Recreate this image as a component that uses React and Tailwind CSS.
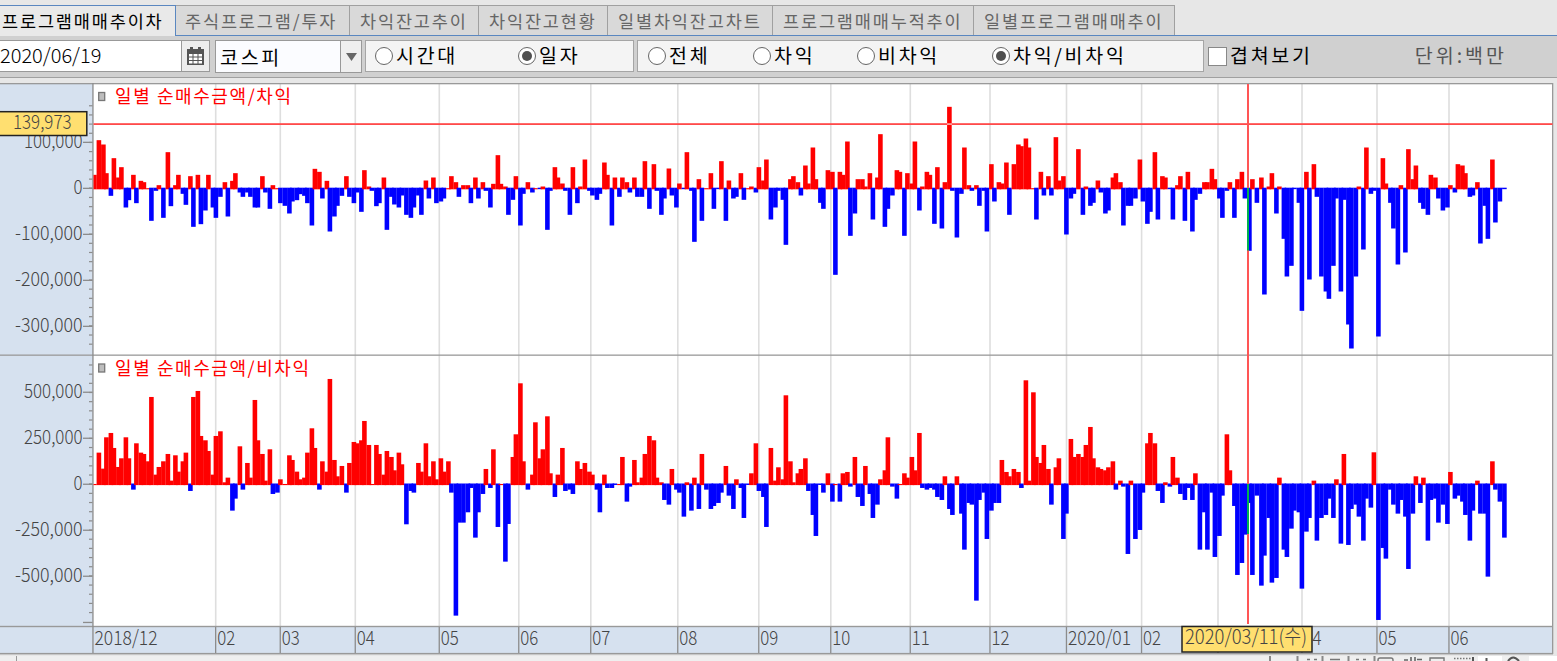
/* eslint-disable react/prop-types */
import { useState } from "react";

const TABS = [
  { label: "프로그램매매추이차", width: "w-[176px]", pad: "pl-0.5" },
  { label: "주식프로그램/투자", width: "w-[174px]", pad: "pl-[9px]" },
  { label: "차익잔고추이", width: "w-[129px]", pad: "pl-2.5" },
  { label: "차익잔고현황", width: "w-[129px]", pad: "pl-2.5" },
  { label: "일별차익잔고차트", width: "w-[165px]", pad: "pl-2.5" },
  { label: "프로그램매매누적추이", width: "w-[201px]", pad: "pl-2.5" },
  { label: "일별프로그램매매추이", width: "w-[201px]", pad: "pl-2.5" },
];

// daily net buying, one entry per trading day, in thirds of a pixel
const ARBITRAGE = [
  // 2018/12
  41, 145, 132, 46, -22, 91, 33, 64, -57, -35, 41, -44, 23, 19, 1, -97, -7, 10, -88, 109, -53, 10, 41, -16, -49, 37, -115, 41, -107, -66, 41, -57,
  // 02
  -88, -25, 19, -84, 23, 46, -12, -25, -12, -25, -57, -57, 37, -12, -61, 10, 1,
  // 03
  -44, -52, -75, -39, -35, -17, -22, -44, -111, 59, 50, -30, 23, -129, -84, -52, -22, 37, -25, -44,
  // 04
  -12, -70, 55, 6, -7, -53, -44, 33, -124, -25, -48, -57, -21, -79, -88, -57, -21, -79, 24, -30, 33, -44,
  // 05
  -39, -30, 1, 37, 19, -25, 10, 10, -44, 33, -30, 19, -7, -57, 14, 100, 14, 6, -79, -34, 37,
  // 06
  -111, -16, 19, -12, 1, -2, 6, -124, -7, 64, 33, 15, -7, -79, 64, -44, 6, 87, -7,
  // 07
  -21, -34, -16, 78, 41, -111, 33, -25, 33, 19, -12, 33, -25, -25, 82, -61, 73, -7, -79, -30, 60, -21, -57,
  // 08
  15, -2, 109, -7, -160, 28, -97, 1, 46, -61, -2, 82, -97, 24, -30, -25, 46, -34, 1, 6, -12,
  // 09
  64, 24, 87, -93, -57, -7, -34, -169, 28, 37, 19, -21, 69, 15, 123, 28, -43, -61, 55,
  // 10
  50, -259, 50, 41, 141, -142, -75, 28, 28, 6, 46, -93, 33, 163, -115, -61, -21, 55, 50, -142, 46,
  // 11
  15, 141, -66, 6, 50, 41, -106, 64, -120, 19, 245, -7, -147, -16, 123, 10, -7, 10, -52, -7, -129,
  // 12
  73, -39, 19, 15, 78, -79, 73, 132, 127, 150, 123, 1, -93, 50, -21, 37, -21, 154, 24, 37,
  // 2020/01
  -138, -30, -16, 118, -79, 6, -52, -43, 24, -12, -75, -66, 33, 46, 19, -111, -52, -52, -30, 87,
  // 02
  -39, -106, -70, 109, -93, 37, 33, -2, -93, 10, 37, -97, 50, -129, -34, -16, 19, 19, 59, 28,
  // 03
  -30, -88, -7, 19, -88, 28, 50, -30, -187, 28, -43, 33, -318, 6, 46, -75, 6, -151, -264, -232, -2, -43,
  // 04
  -367, 50, -273, 73, -25, -264, -309, -331, -232, -30, -309, -34, -408, -480, -264, 6, -183, 123, -16, -7,
  // 05
  -444, 91, 15, -43, -120, -228, 10, -192, 118, 28, 69, -43, -61, -79, 41, 33, -30, -66, -57,
  // 06
  10, -12, 73, 69, 46, -25, -21, 19, -165, -52, -151, 87, -102, -39, -2,
];

const NON_ARBITRAGE = [
  // 2018/12
  1, 95, 47, 141, 154, 109, 52, 78, 141, 78, -16, 123, 95, 91, 69, 262, 29, 52, 69, 91, 11, 87, 38, 69, 95, -20, 262, 280, 145, 132, 100, 29,
  // 02
  145, 159, 6, 20, -79, -43, 114, -16, 64, 20, 253, 132, 91, 11, 105, -29, -25,
  // 03
  15, 1, 87, 73, 38, 15, 20, 95, 168, 109, -16, 69, 38, 316, 73, 24, 55, -25, 64, 127,
  // 04
  123, 132, 190, 118, 1, 118, 91, 29, 100, 82, 42, 95, 60, -120, -20, -25, 64, 38, 123, 24, 69, 15,
  // 05
  78, 38, 69, -25, -394, -115, -115, -84, -11, -160, -84, -29, 46, -11, 105, -128, 1, -232, -119, 82, 150,
  // 06
  303, 69, -16, 29, 186, 78, 105, 204, 33, -38, 29, 109, -20, -16, -29, 69, 46, 64, 38,
  // 07
  29, -16, -84, 29, -11, -11, -2, 1, 82, -52, -7, 73, 6, 20, 91, 145, 132, 20, 6, -47, -61, 46, -16,
  // 08
  -25, -97, 6, -79, 20, -74, 91, -16, -74, -65, -56, -25, 55, -34, -74, 15, -11, -101, -2, 33, 123,
  // 09
  -20, -38, -128, 109, 11, 51, 15, 267, 69, 6, 33, 46, 78, -20, -92, -155, -2, -25, 33,
  // 10
  -52, 1, -52, 33, 37, -7, 82, -38, -65, 55, -29, -101, -61, 15, 42, 141, -7, -43, 1, 33, 20,
  // 11
  82, 42, 154, -11, -16, -11, -16, -38, -47, 24, -74, -92, 24, -88, -196, -56, -61, -349, -47, -25, -164,
  // 12
  -79, -56, -56, 73, 37, 24, 46, 37, -11, 312, 11, 276, 82, 64, 118, 46, -61, 51, 78, -164,
  // 2020/01
  -88, 136, 82, 91, 82, 118, 172, 78, 51, 46, 42, 51, 69, -16, 11, -7, -209, 11, -164, -137,
  // 02
  -25, 123, 154, 123, -20, -56, 6, -7, 82, 20, -29, -47, -11, -47, 33, -196, -84, -196, -25, -218,
  // 03
  -155, -34, 150, 42, -65, -272, -236, -151, -56, -272, -34, -304, -214, -101, -295, -281, 20, -196, -218, -133, -79, -84,
  // 04
  -313, -142, -101, 11, -169, -101, -92, -43, -101, 15, -178, 91, -182, -74, -61, -97, -169, -43, -70, 96,
  // 05
  -407, -191, -223, -16, -61, -88, -47, -97, -254, -88, 24, -56, 20, -169, -47, -43, -115, -61, -119,
  // 06
  37, -43, -34, -52, -92, -169, -79, 11, -88, -88, -277, 69, -16, -52, -160,
];

const MONTHS = [
  { x: 93, label: "2018/12" },
  { x: 215.7, label: "02" },
  { x: 280.3, label: "03" },
  { x: 355.3, label: "04" },
  { x: 439.3, label: "05" },
  { x: 518.8, label: "06" },
  { x: 590.8, label: "07" },
  { x: 677.8, label: "08" },
  { x: 758.8, label: "09" },
  { x: 830.8, label: "10" },
  { x: 910.3, label: "11" },
  { x: 990, label: "12" },
  { x: 1066.5, label: "2020/01" },
  { x: 1141.6, label: "02" },
  { x: 1218, label: "" },
  { x: 1302, label: "4", dx: 10.5 },
  { x: 1377, label: "05" },
  { x: 1449, label: "06" },
];

const digits = "font-['Noto_Sans_CJK_KR',sans-serif] font-light";

// width of a label on the 9px digit grid
function labelWidth(text) {
  return [...text].reduce((w, c) => w + (c === "," ? 4.5 : 9), 0);
}

function GridText({ x, y, text, end, fill = "#444" }) {
  const w = labelWidth(text);
  return (
    <text
      x={end ? x - w : x}
      y={y}
      textLength={w}
      lengthAdjust="spacingAndGlyphs"
      fill={fill}
      className={`${digits} text-[20px]`}
    >
      {text}
    </text>
  );
}

function Bars({ data, zero }) {
  return data.map((v, i) => {
    const left = 96.6 + 1.5 * Math.round((i - 1) * 2.5311);
    const x = Math.max(left, 93.5);
    const h = Math.abs(v) / 3;
    return (
      <rect
        key={i}
        x={x}
        y={v > 0 ? zero - h : zero - 0.8}
        width={left + 4.6 - x}
        height={h + 0.8}
        fill={v > 0 ? "#ff0000" : "#0000ff"}
      />
    );
  });
}

function Axis({ labels, zero, step, from, to }) {
  const minor = [];
  for (let y = zero; y > from; y -= 9.17) minor.push(y);
  for (let y = zero; y < to; y += 9.17) minor.push(y);
  return (
    <g>
      {minor.map((y, i) => (
        <rect key={i} x="89" y={y - 0.6} width="3.5" height="1.2" fill="#8c8c8c" />
      ))}
      {labels.map(([n, text]) => (
        <g key={n}>
          <rect x="83" y={zero - n * step - 0.6} width="9.5" height="1.3" fill="#8c8c8c" />
          <GridText x={82.5} y={zero - n * step + 5.6} text={text} end />
        </g>
      ))}
    </g>
  );
}

function Legend({ y, text, width }) {
  return (
    <g>
      <rect x="98.7" y={y - 5} width="6" height="8" fill="#bdbdbd" stroke="#777" strokeWidth="1.3" />
      <text
        x="115"
        y={y + 5.8}
        textLength={width}
        fill="#ff0000"
        className="font-['Noto_Sans_CJK_KR',sans-serif] text-[18px] font-normal"
      >
        {text}
      </text>
    </g>
  );
}

function Chart() {
  return (
    <svg width="1557" height="573" viewBox="0 83 1557 573" className="block">
      <rect x="0" y="83" width="93" height="571" fill="#d6e1ef" />
      <rect x="93" y="83" width="1459" height="543" fill="#fff" />
      <rect x="0" y="627" width="1552" height="26" fill="#d6e1ef" />

      {MONTHS.slice(1).map((m) => (
        <rect key={m.x} x={m.x - 0.8} y="84" width="1.6" height="542" fill="#dedede" />
      ))}

      <Axis
        zero={188.3}
        step={46}
        from={100}
        to={352}
        labels={[
          [1, "100,000"],
          [0, "0"],
          [-1, "-100,000"],
          [-2, "-200,000"],
          [-3, "-300,000"],
        ]}
      />
      <Axis
        zero={484.2}
        step={46}
        from={357}
        to={620}
        labels={[
          [2, "500,000"],
          [1, "250,000"],
          [0, "0"],
          [-1, "-250,000"],
          [-2, "-500,000"],
        ]}
      />
      <rect x="83" y="621.8" width="9.5" height="1.3" fill="#8c8c8c" />

      <Legend y={97.5} text="일별 순매수금액/차익" width={176} />
      <Legend y={369} text="일별 순매수금액/비차익" width={194} />

      <rect x="0" y="83" width="1553" height="1.3" fill="#999" />
      <rect x="0" y="354.5" width="1552" height="1.3" fill="#999" />
      <rect x="0" y="625.8" width="1552" height="1.4" fill="#999" />
      <rect x="0" y="652.9" width="1553" height="1.5" fill="#999" />
      <rect x="92.3" y="83" width="1.3" height="570" fill="#8c8c8c" />
      <rect x="1552" y="83" width="1.3" height="571" fill="#999" />

      {/* crosshair */}
      <rect x="93.5" y="123.2" width="1459" height="1.8" fill="#ff4a4a" />
      <Bars data={ARBITRAGE} zero={188.5} />
      <Bars data={NON_ARBITRAGE} zero={484.3} />
      <rect x="947" y="123.2" width="5" height="1.8" fill="#ff9a9a" />
      <rect x="1247" y="84" width="2" height="540" fill="#ff5555" />
      <rect x="1247" y="188" width="2" height="62.5" fill="#00b050" />
      <rect x="1247" y="484" width="2" height="50" fill="#00b050" />

      {MONTHS.map((m) => (
        <g key={m.x}>
          {m.x > 93 && <rect x={m.x - 0.7} y="627" width="1.3" height="26" fill="#8c8c8c" />}
          <GridText x={m.x + (m.dx ?? 1.5)} y={645.3} text={m.label} />
        </g>
      ))}

      <rect x="-2" y="111.7" width="88.8" height="23.8" fill="#ffdf70" stroke="#222" strokeWidth="1.5" />
      <GridText x={13} y={129} text="139,973" />
      <rect x="1182" y="626.5" width="130" height="25.5" fill="#ffdf70" stroke="#222" strokeWidth="1.5" />
      <text
        x="1185"
        y="644.3"
        textLength="122"
        lengthAdjust="spacingAndGlyphs"
        fill="#444"
        className={`${digits} text-[20px]`}
      >
        2020/03/11(수)
      </text>
    </svg>
  );
}

function Radio({ label, value, selected, onSelect, width }) {
  return (
    <button onClick={() => onSelect(value)} className={`flex h-full shrink-0 items-center ${width}`}>
      <span className="flex size-[18px] shrink-0 items-center justify-center rounded-full border-[1.5px] border-[#666] bg-white">
        {selected === value && <span className="size-[10px] rounded-full bg-[#505050]" />}
      </span>
      <span className="ml-[3px] pb-[3px] whitespace-nowrap">{label}</span>
    </button>
  );
}

function BottomBar() {
  return (
    <div className="flex h-[5px] items-start overflow-hidden bg-[#efefef]">
      <div className="h-full w-[17px] border-r border-[#999]" />
      <div className="h-full w-[1254px] border-r-2 border-[#888]" />
      <svg width="286" height="5" viewBox="1271 656 286 5" fill="none" stroke="#777" strokeWidth="1.4">
        <path d="M1297.5 656v5M1322.5 656v5M1348.5 656v5M1374.5 656v5" stroke="#888" strokeWidth="2" />
        <path d="M1307 659.5h3M1314 659.5h3M1330 659.5h10M1356 659.5h3M1363 659.5h3" />
        <path d="M1378 661v-1q0-2 2-2h11q2 0 2 2v1M1430 661v-3h14v3" />
        <path d="M1404 660h4M1411 657v4M1415 657v4M1417 659.5h5" stroke="#666" strokeWidth="1.6" />
        <path d="M1454 658.5h18" strokeDasharray="1.5 1.5" />
        <path d="M1473 657v4" stroke="#555" strokeWidth="2" />
        <path d="M1478 656h24v5h-24zM1529 656h28v5h-28z" fill="#fff" stroke="none" />
        <path d="M1486.5 658v3M1508 661q5-7 11 0" stroke="#555" strokeWidth="2" />
      </svg>
    </div>
  );
}

export default function App() {
  const [tab, setTab] = useState(0);
  const [period, setPeriod] = useState("day");
  const [kind, setKind] = useState("both");

  return (
    <div className="h-[661px] w-[1557px] overflow-hidden bg-[#e7e7e7] font-['Noto_Sans_CJK_KR',sans-serif] font-normal">
      <div className="flex h-9 items-start border-b-[1.5px] border-[#5a87c0] pt-[5px]">
        {TABS.map((t, i) => (
          <button
            key={t.label}
            onClick={() => setTab(i)}
            className={`shrink-0 overflow-hidden border-t border-r text-left text-[17.5px] leading-[27px] tracking-[1.85px] whitespace-nowrap ${t.width} ${t.pad} ${
              i === tab
                ? "h-[31px] border-[#5a87c0] bg-[#e9e9e9] pb-0.5 text-black"
                : "h-[30px] border-[#a0a0a0] bg-[#d9d9d9] pb-px text-[#666]"
            }`}
          >
            {t.label}
          </button>
        ))}
      </div>

      <div className="flex h-[42px] items-start border-b border-[#a0a0a0] bg-[#d0d0d0] pt-1 text-[19.5px] leading-none tracking-[2.7px] text-black">
        <div className="flex h-8 w-[210px] shrink-0 border-[1.5px] border-l-0 border-[#999] bg-white">
          <div className={`flex w-[181px] shrink-0 items-center pb-0.5 text-[20px] tracking-normal ${digits}`}>
            2020/06/19
          </div>
          <div className="flex flex-1 items-center justify-center border-l border-[#999] bg-[#ededed]">
            <svg width="17" height="18" viewBox="0 0 17 18">
              <path d="M0 2h3V0h3v2h5V0h3v2h3v16H0z" fill="#555" />
              <path d="M2 7h3.5v2.5H2zM6.5 7h4v2.5h-4zM11.5 7H15v2.5h-3.5zM2 10.5h3.5V13H2zM6.5 10.5h4V13h-4zM11.5 10.5H15V13h-3.5zM2 14h3.5v2.5H2zM6.5 14h4v2.5h-4zM11.5 14H15v2.5h-3.5z" fill="#fff" />
            </svg>
          </div>
        </div>

        <div className="ml-[5px] flex h-[33px] w-[147px] shrink-0 border-[1.5px] border-[#999] bg-[#fbfcff]">
          <div className="flex flex-1 items-center pl-1">코스피</div>
          <div className="flex w-[21px] items-center justify-center border-l border-[#999] bg-[#efefef]">
            <svg width="11" height="8" viewBox="0 0 11 8">
              <path d="M0 0h11L5.5 8z" fill="#666" />
            </svg>
          </div>
        </div>

        <div className="ml-[3px] flex h-8 w-[269px] shrink-0 border-[1.5px] border-[#a5a5a5] bg-[#f4f4f4] pl-[9px]">
          <Radio label="시간대" value="time" selected={period} onSelect={setPeriod} width="w-[143px]" />
          <Radio label="일자" value="day" selected={period} onSelect={setPeriod} width="w-20" />
        </div>

        <div className="ml-[3px] flex h-8 w-[567px] shrink-0 border-[1.5px] border-[#a5a5a5] bg-[#f4f4f4] pl-2.5">
          <Radio label="전체" value="all" selected={kind} onSelect={setKind} width="w-[105px]" />
          <Radio label="차익" value="arb" selected={kind} onSelect={setKind} width="w-[104px]" />
          <Radio label="비차익" value="non" selected={kind} onSelect={setKind} width="w-[135px]" />
          <Radio label="차익/비차익" value="both" selected={kind} onSelect={setKind} width="w-[150px]" />
        </div>

        <label className="ml-1 flex h-8 shrink-0 items-center">
          <span className="size-[19px] border-[1.5px] border-[#888] bg-white" />
          <span className="ml-[3px] pb-[3px] whitespace-nowrap">겹쳐보기</span>
        </label>
        <div className="ml-auto flex h-8 items-center pr-[50px] pb-[3px] tracking-[3px] whitespace-nowrap text-[#555]">
          단위:백만
        </div>
      </div>

      <div className="h-[5px]" />
      <Chart />
      <BottomBar />
    </div>
  );
}
